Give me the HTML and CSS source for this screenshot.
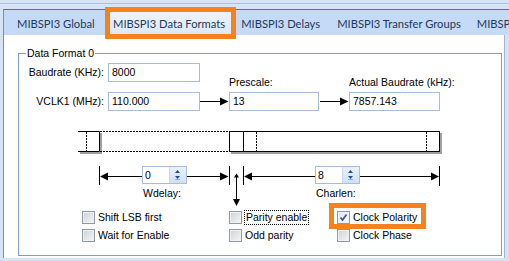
FILE: index.html
```html
<!DOCTYPE html>
<html lang="en">
  <head>
    <meta charset="UTF-8" />
    <meta name="viewport" content="width=device-width, initial-scale=1.0" />
    <title>MIBSPI3 Data Formats</title>
    <link rel="stylesheet" href="styles.css">
  </head>
  <body>
    <div class="titlebar"></div>
    <div class="tabctl">
      <div class="tabs">
        <div class="tab">MIBSPI3 Global</div>
        <div class="tab active">MIBSPI3 Data Formats</div>
        <div class="tab">MIBSPI3 Delays</div>
        <div class="tab">MIBSPI3 Transfer Groups</div>
        <div class="tab">MIBSPI3 Port</div>
      </div>

      <div class="page">
        <fieldset class="group">
          <legend>Data Format 0</legend>

          <div class="rates">
            <span class="lbl">Baudrate (KHz):</span>
            <div class="field">8000</div>
            <span class="above pre">Prescale:</span>
            <span class="above act">Actual Baudrate (kHz):</span>

            <span class="lbl">VCLK1 (MHz):</span>
            <div class="field">110.000</div>
            <svg class="arrow" width="29" height="19" viewBox="0 0 29 19">
              <path d="M0 9.5H21" stroke="#000" />
              <polygon points="28.5,9.5 20,5.5 20,13.5" />
            </svg>
            <div class="field">13</div>
            <svg class="arrow" width="30" height="19" viewBox="0 0 30 19">
              <path d="M1 9.5H22" stroke="#000" />
              <polygon points="29.5,9.5 21,5.5 21,13.5" />
            </svg>
            <div class="field">7857.143</div>
          </div>

          <div class="timing">
            <svg class="diagram" width="482" height="88" viewBox="0 0 482 88">
              <!-- frame shadows -->
              <g fill="#a0a0a0">
                <rect x="61" y="13" width="22" height="21" />
                <rect x="212" y="13" width="211" height="21" />
              </g>
              <g fill="#fff">
                <rect x="59" y="11" width="22" height="21" />
                <rect x="210" y="11" width="211" height="21" />
              </g>
              <g stroke="#000" fill="none">
                <path d="M59 11.5H80.5V31.5H59" />
                <rect x="210.5" y="11.5" width="210" height="20" />
                <path d="M224.5 11.5V31.5" />
                <path d="M80.5 46V65M210.5 46V65M224.5 46V65M420.5 46V66" />
                <path d="M89 56.5H123M168 56.5H201M233 56.5H296M341 56.5H412M217.5 57V80" />
              </g>
              <g stroke="#000" stroke-dasharray="2 1" fill="none">
                <path d="M81 11.5H210M81 31.5H210" />
                <path d="M67.5 12V31M237.5 12V31M407.5 12V31" />
              </g>
              <!-- arrow heads -->
              <g fill="#000">
                <polygon points="81,56.5 89,52.5 89,60.5" />
                <polygon points="209.5,56.5 201,52.5 201,60.5" />
                <polygon points="225,56.5 233,52.5 233,60.5" />
                <polygon points="420,56.5 412,52.5 412,60.5" />
                <polygon points="217.5,53.5 215,57.5 220,57.5" />
                <polygon points="217.5,86 214,79 221,79" />
              </g>
            </svg>

            <div class="spin wdelay">
              <span>0</span>
              <div class="btns">
                <svg width="15" height="16" viewBox="0 0 15 16">
                  <polygon points="7.5,3 5,6 10,6" fill="#1f4f93" />
                  <polygon points="7.5,12 5,9 10,9" fill="#1f4f93" />
                  <path d="M5 12.5H10" stroke="#8fb0da" />
                </svg>
              </div>
            </div>
            <div class="spin charlen">
              <span>8</span>
              <div class="btns">
                <svg width="15" height="16" viewBox="0 0 15 16">
                  <polygon points="7.5,3 5,6 10,6" fill="#1f4f93" />
                  <polygon points="7.5,12 5,9 10,9" fill="#1f4f93" />
                  <path d="M5 12.5H10" stroke="#8fb0da" />
                </svg>
              </div>
            </div>
            <span class="cap wdelay-cap">Wdelay:</span>
            <span class="cap charlen-cap">Charlen:</span>
          </div>

          <div class="checks">
            <div class="chk"><span class="box"></span><span>Shift LSB first</span></div>
            <div class="chk"><span class="box"></span><span class="focus">Parity enable</span></div>
            <div class="chk">
              <span class="box checked">
                <svg width="11" height="11" viewBox="0 0 11 11">
                  <path d="M2.5 5.5L4.5 8L8.5 2.5" stroke="#3e5b9e" stroke-width="1.8" fill="none" />
                </svg>
              </span>
              <span>Clock Polarity</span>
            </div>
            <div class="chk"><span class="box"></span><span>Wait for Enable</span></div>
            <div class="chk"><span class="box"></span><span>Odd parity</span></div>
            <div class="chk"><span class="box"></span><span>Clock Phase</span></div>
          </div>
        </fieldset>
      </div>
    </div>

    <div class="mark mark-tab"></div>
    <div class="mark mark-pol"></div>
  </body>
</html>
```

FILE: styles.css
```css
body {
  margin: 0;
  width: 509px;
  height: 261px;
  overflow: hidden;
  background: #d5e3f4;
  font-family: "Liberation Sans", Arial, sans-serif;
  font-size: 10.5px;
  color: #000;
}
.titlebar {
  height: 9px;
  background: linear-gradient(#d7e4f5 3px, #a8c1e4 3px, #a8c1e4 4px, #d7e4f5 4px);
}
.tabctl {
  margin-left: 3px;
  border-left: 1px solid #8b8b8b;
  border-top: 1px solid #6e6e6e;
}
.tabs {
  display: flex;
  height: 25px;
  padding-left: 5px;
  background: #c4daf7;
  white-space: nowrap;
  overflow: hidden;
  font-family: Lato, "Noto Sans", sans-serif;
  font-size: 11.2px;
  color: #1e395b;
}
.tab {
  flex: none;
  min-width: 80px;
  padding: 2px 8px 0;
  line-height: 23px;
}
.tab.active {
  background: linear-gradient(#eef4fc, #dce8f8);
}
.page {
  margin-right: 4px;
  height: 223px;
  padding: 12px 2px 0 14px;
  box-sizing: border-box;
  background: #fff;
  border-right: 1px solid #9db6d8;
}
.group {
  width: 484px;
  min-width: 0;
  margin: 0;
  padding: 0 0 11px 0;
  box-sizing: border-box;
  border: 1px solid #7f9dc9;
}
.group legend {
  margin-left: 7px;
  padding: 0 1px;
  line-height: 13px;
}

/* baudrate calculation */
.rates {
  display: grid;
  grid-template-columns: 89px 92px 29px 90px 30px 91px;
  grid-template-rows: 19px 19px;
  row-gap: 10px;
  margin-top: 3px;
}
.lbl {
  grid-column: 1;
  align-self: center;
  padding-right: 4px;
  text-align: right;
  line-height: 13px;
}
.field {
  border: 1px solid #a7bddb;
  padding-left: 3px;
  line-height: 17px;
}
.above {
  grid-row: 1;
  align-self: end;
  margin-bottom: -7px;
  line-height: 13px;
  white-space: nowrap;
}
.above.pre {
  grid-column: 4;
}
.above.act {
  grid-column: 6;
}
.arrow {
  display: block;
}

/* frame timing diagram */
.timing {
  position: relative;
  height: 88px;
  margin-top: 9px;
}
.diagram {
  display: block;
}
.spin {
  position: absolute;
  top: 46px;
  width: 45px;
  height: 18px;
  box-sizing: border-box;
  display: flex;
  border: 1px solid #a7bddb;
  background: #fff;
}
.spin span {
  flex: 1;
  padding-left: 2px;
  line-height: 16px;
}
.spin .btns {
  width: 16px;
  border-left: 1px solid #c9d8ec;
  background: linear-gradient(#eaf2fc, #cfe0f5);
}
.spin .btns svg {
  display: block;
}
.wdelay {
  left: 123px;
}
.charlen {
  left: 296px;
}
.cap {
  position: absolute;
  top: 67px;
  line-height: 13px;
}
.wdelay-cap {
  left: 124px;
}
.charlen-cap {
  left: 297px;
}

/* option checkboxes */
.checks {
  display: grid;
  grid-template-columns: 147px 108px 1fr;
  grid-auto-rows: 18px;
  margin-left: 63px;
}
.chk {
  display: flex;
  align-items: center;
  gap: 3px;
  line-height: 16px;
}
.box {
  width: 13px;
  height: 13px;
  box-sizing: border-box;
  border: 1px solid #8f99aa;
  background: linear-gradient(135deg, #cfd1d4, #f6f6f6);
  box-shadow: inset 0 0 0 1px #eef0f3;
}
.box.checked {
  background: linear-gradient(135deg, #e4e7ec, #fbfbfb);
}
.box svg {
  display: block;
}
.focus {
  margin-left: -1px;
  padding: 0 1px;
  border: 1px dotted #000;
  line-height: 13px;
}

/* orange callouts */
.mark {
  position: absolute;
  box-sizing: border-box;
  border: 5px solid #f5821f;
}
.mark-tab {
  left: 105px;
  top: 7px;
  width: 131px;
  height: 32px;
}
.mark-pol {
  left: 329px;
  top: 203px;
  width: 97px;
  height: 26px;
}
```
